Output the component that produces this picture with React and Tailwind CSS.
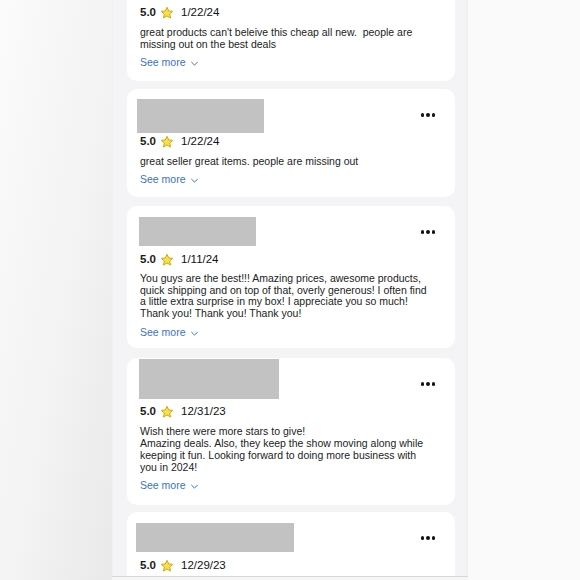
import React from "react";

function Star() {
  return (
    <svg width="14" height="14" viewBox="0 0 24 24" className="shrink-0">
      <path
        d="M12 2.2l2.9 6.3 6.9.7-5.2 4.6 1.5 6.8L12 17.1l-6.1 3.5 1.5-6.8-5.2-4.6 6.9-.7z"
        fill="#f9e04a"
        stroke="#c9a20a"
        strokeWidth="1.6"
        strokeLinejoin="round"
      />
    </svg>
  );
}

function Dots() {
  return (
    <div className="absolute top-[24px] right-[20px] flex gap-[2px]">
      <span className="w-[3.5px] h-[3.5px] rounded-full bg-[#111]" />
      <span className="w-[3.5px] h-[3.5px] rounded-full bg-[#111]" />
      <span className="w-[3.5px] h-[3.5px] rounded-full bg-[#111]" />
    </div>
  );
}

function Rating({ date, mt }) {
  return (
    <div className={`flex items-center h-[16px] ${mt}`}>
      <span className="text-[11.5px] font-bold text-[#1a1a1a]">5.0</span>
      <span className="ml-[4px]">
        <Star />
      </span>
      <span className="ml-[7px] text-[11.5px] text-[#111]">{date}</span>
    </div>
  );
}

function SeeMore({ mt }) {
  return (
    <div className={`flex items-center h-[16px] text-[10.5px] text-[#3a72c6] ${mt}`}>
      <span>See more</span>
      <svg width="9" height="9" viewBox="0 0 10 10" className="ml-[4px]">
        <path d="M1.5 3.3L5 6.8l3.5-3.5" fill="none" stroke="#3a72c6" strokeWidth="1.1" />
      </svg>
    </div>
  );
}

function Body({ lines, leading = "leading-[12px]" }) {
  return (
    <div className={`mt-[5px] text-[10.5px] text-[#222] ${leading}`}>
      {lines.map((l, i) => (
        <div key={i} className="whitespace-pre">{l}</div>
      ))}
    </div>
  );
}

export default function App() {
  return (
    <div
      className="w-[580px] h-[580px] flex overflow-hidden"
      style={{ fontFamily: "'Liberation Sans', Arial, sans-serif" }}
    >
      <div className="w-[112px] h-full bg-[linear-gradient(100deg,#fbfbfb_0%,#f3f3f3_55%,#e9e9ea_100%)]" />
      <div className="w-[356px] h-full flex flex-col">
        <div className="relative h-[576px] bg-[#f4f4f6] overflow-hidden pl-[14px] pr-[12px] flex flex-col gap-[8px] border-x border-[#f0f0f2]">
          <div className="absolute top-0 left-[114px] w-[53px] h-[3px] bg-black" />
          {/* card 1 */}
          <div className="relative -mt-[10px] bg-white rounded-[10px] pl-[13px] pt-[15px] pb-[10px]">
            <Rating date="1/22/24" mt="" />
            <Body
              lines={[
                "great products can't beleive this cheap all new.  people are",
                "missing out on the best deals",
              ]}
            />
            <SeeMore mt="mt-[5px]" />
          </div>
          {/* card 2 */}
          <div className="relative bg-white rounded-[10px] pl-[10px] pt-[10px] pb-[9px]">
            <div className="w-[127px] h-[34px] bg-[#c2c2c2]" />
            <div className="pl-[3px]">
              <Rating date="1/22/24" mt="mt-[1px]" />
              <Body lines={["great seller great items. people are missing out"]} />
              <SeeMore mt="mt-[5px]" />
            </div>
            <Dots />
          </div>
          {/* card 3 */}
          <div className="relative mt-[1px] bg-white rounded-[10px] pl-[12px] pt-[11px] pb-[7px]">
            <div className="w-[117px] h-[29px] bg-[#c2c2c2]" />
            <div className="pl-[1px]">
              <Rating date="1/11/24" mt="mt-[6px]" />
              <Body
                leading="leading-[11.5px]"
                lines={[
                  "You guys are the best!!! Amazing prices, awesome products,",
                  "quick shipping and on top of that, overly generous! I often find",
                  "a little extra surprise in my box! I appreciate you so much!",
                  "Thank you! Thank you! Thank you!",
                ]}
              />
              <SeeMore mt="mt-[6px]" />
            </div>
            <Dots />
          </div>
          {/* card 4 */}
          <div className="relative mt-[2px] bg-white rounded-[10px] pl-[12px] pt-[1px] pb-[11px]">
            <div className="w-[140px] h-[40px] bg-[#c2c2c2]" />
            <div className="pl-[1px]">
              <Rating date="12/31/23" mt="mt-[5px]" />
              <Body
                lines={[
                  "Wish there were more stars to give!",
                  "Amazing deals. Also, they keep the show moving along while",
                  "keeping it fun. Looking forward to doing more business with",
                  "you in 2024!",
                ]}
              />
              <SeeMore mt="mt-[5px]" />
            </div>
            <Dots />
          </div>
          {/* card 5 */}
          <div className="relative -mt-[1px] bg-white rounded-[10px] pl-[9px] pt-[11px] pb-[20px]">
            <div className="w-[158px] h-[29px] bg-[#c2c2c2]" />
            <div className="pl-[4px]">
              <Rating date="12/29/23" mt="mt-[6px]" />
            </div>
            <Dots />
          </div>
        </div>
        <div className="h-[1px] bg-[#d6d6d8]" />
        <div className="flex-1 bg-[#f6f6f6]" />
      </div>
      <div className="flex-1 h-full bg-[#fafafa]" />
    </div>
  );
}
